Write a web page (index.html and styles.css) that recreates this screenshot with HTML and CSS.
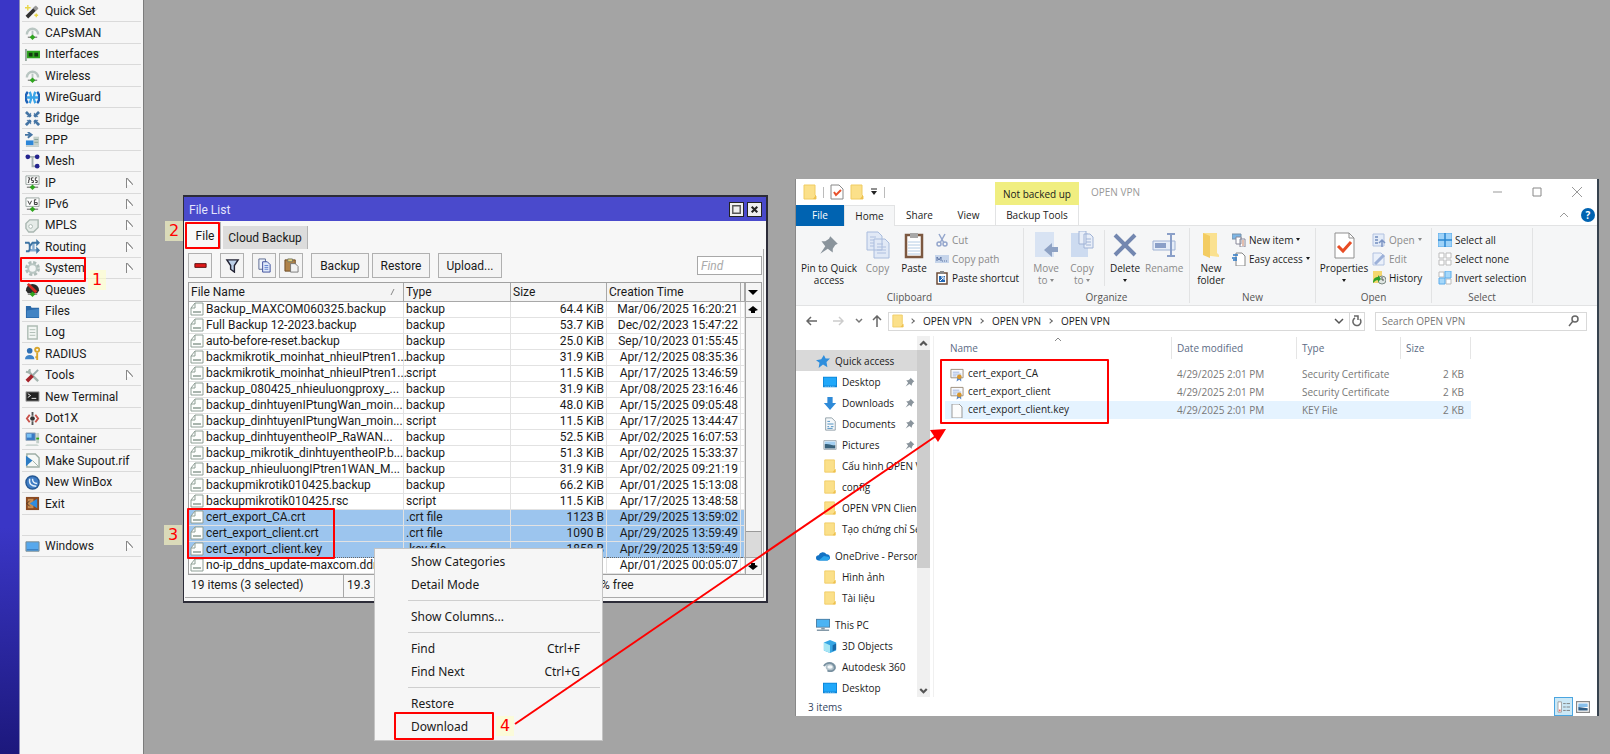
FILE: index.html
```html
<!DOCTYPE html>
<html lang="en">
  <head>
    <meta charset="UTF-8" />
    <meta name="viewport" content="width=device-width, initial-scale=1.0" />
    <title>Download certificates</title>
    <link rel="stylesheet" href="styles.css">
  </head>
  <body>
    <!-- shared icons -->
    <svg class="sprite">
      <symbol id="doc" viewBox="0 0 14 14"><path d="M1 13V6l4-5h8v12z" fill="#fdfefd" stroke="#8f9f96"/><path d="M1 6h4V1" fill="none" stroke="#8f9f96"/><path d="M3 10h8" stroke="#a9b5ae" stroke-width="2"/></symbol>
      <symbol id="folder" viewBox="0 0 14 16"><path d="M1 1h11v10l1 1v3H1z" fill="#fbe08a" stroke="#f0cc62"/><path d="M10 15l3-4v4z" fill="#eec04e"/></symbol>
      <symbol id="pin" viewBox="0 0 16 16"><path d="M9 1l6 6-2 1-2 3v3l-4-3-6 4 4-6-3-4h3l3-2z" fill="#8a949c"/></symbol>
      <symbol id="antenna" viewBox="0 0 16 16"><path d="M2 10a6 6 0 1 1 12 0" fill="none" stroke="#b9c6c2" stroke-width="2.5"/><path d="M8 6v7" stroke="#b9c6c2" stroke-width="2"/><path d="M3 13h10" stroke="#555"/><path d="M8 10l3 3-3 3-3-3z" fill="#2fa51e"/></symbol>
      <symbol id="cert" viewBox="0 0 15 14"><path d="M1 1h13v9H1z" fill="#f8fafd" stroke="#9c8c78"/><path d="M3 4h7M3 6h9M3 8h4" stroke="#9bb3e0"/><path d="M8 9l-1 5 3-2 2 2v-5z" fill="#5c86c4"/><circle cx="10" cy="9" r="2.500" fill="#d9972c"/></symbol>
      <symbol id="screen" viewBox="0 0 16 14"><path d="M0 1h16v12H0z" fill="#0c84d8"/><path d="M1 2h14v9H1z" fill="#20a8fa"/><path d="M2 12h12" stroke="#8fd0f8" stroke-dasharray="1 1"/></symbol>
      <symbol id="pages" viewBox="0 0 24 28"><path d="M1 1h11l4 4v14H1zM8 8h11l4 4v15H8z" fill="#e1e9f6" stroke="#a9bcdd"/><path d="M4 6h6M4 9h4M4 12h4M4 15h4M11 13h6M11 16h9M11 19h9M11 22h9" stroke="#aebfdf"/></symbol>
    </svg>

    <div class="rail"></div>
    <nav class="sidebar">
      <ul>
        <li><a href="#"><svg viewBox="0 0 16 16"><path d="M2 14L12 4" stroke="#333" stroke-width="4"/><path d="M10 6l3-3" stroke="#999" stroke-width="4"/><path d="M3 1v6M0 4h6M12 10v4M10 12h4" stroke="#e8d648" stroke-width="1.5"/></svg>Quick Set</a></li>
        <li><a href="#"><svg><use href="#antenna"/></svg>CAPsMAN</a></li>
        <li><a href="#"><svg viewBox="0 0 16 16"><path d="M1 2v13" stroke="#98a8a0" stroke-width="2"/><path d="M2 4h14v8H2z" fill="#2ea51f"/><path d="M4 6h4v4H4zM10 6h4v4h-4z" fill="#143b12"/></svg>Interfaces</a></li>
        <li><a href="#"><svg><use href="#antenna"/></svg>Wireless</a></li>
        <li><a href="#"><svg viewBox="0 0 16 16"><path d="M3 2C0 5 0 11 3 14M13 2c3 3 3 9 0 12" fill="none" stroke="#1c62b8" stroke-width="2.500"/><path d="M5 2c2 4 2 8 0 12M11 2c-2 4-2 8 0 12M2 8h12" fill="none" stroke="#39a4e8" stroke-width="2.500"/></svg>WireGuard</a></li>
        <li><a href="#"><svg viewBox="0 0 16 16"><path d="M1 1l5 5M15 1l-5 5M1 15l5-5M15 15l-5-5" stroke="#4474a4" stroke-width="3"/><path d="M6 2v4H2M10 2v4h4M6 14v-4H2M10 14v-4h4" fill="none" stroke="#4474a4"/></svg>Bridge</a></li>
        <li><a href="#"><svg viewBox="0 0 16 16"><path d="M0 3h5M3 0l4 3-4 3" fill="none" stroke="#4474a4" stroke-width="2"/><path d="M9 5h6v9H9z" fill="#c3cfc9"/><path d="M10 8h4M10 11h4" stroke="#8aa198"/><path d="M1 9h8v5H1z" fill="#2d86d8"/><path d="M1 15h14" stroke="#9aa"/></svg>PPP</a></li>
        <li><a href="#"><svg viewBox="0 0 16 16"><path d="M3 3h10M8 3v10h5" fill="none" stroke="#a6b2b0" stroke-width="2"/><circle cx="3" cy="3" r="2.5" fill="#24248e"/><circle cx="13" cy="3" r="2.5" fill="#24248e"/><circle cx="13" cy="13" r="2.5" fill="#24248e"/></svg>Mesh</a></li>
        <li class="more"><a href="#"><svg viewBox="0 0 16 16"><path d="M1 1h14v9H1z" fill="#fff" stroke="#98a29e"/><path d="M3 3h2v2H4v3H3M7 8h2V6H7V3h2M11 8h2V6h-2V3h2" fill="none" stroke="#333"/><path d="M2 13h12" stroke="#555"/><path d="M8 10l3 3-3 3-3-3z" fill="#2fa51e"/></svg>IP</a></li>
        <li class="more"><a href="#"><svg viewBox="0 0 16 16"><path d="M1 1h14v9H1z" fill="#fff" stroke="#98a29e"/><path d="M3 4l2 4 2-4M12 3h-2v5h3V6h-3" fill="none" stroke="#333"/><path d="M2 13h12" stroke="#555"/><path d="M8 10l3 3-3 3-3-3z" fill="#2fa51e"/></svg>IPv6</a></li>
        <li class="more"><a href="#"><svg viewBox="0 0 16 16"><path d="M5 2h9v8l-5 5H4l-3-4V6z" fill="#e5ebe8" stroke="#a9b7b1" stroke-width="1.5"/><circle cx="6" cy="9" r="2" fill="#fff" stroke="#a9b7b1"/></svg>MPLS</a></li>
        <li class="more"><a href="#"><svg viewBox="0 0 16 16"><path d="M5 12h8M9 4v8" fill="none" stroke="#86acd0" stroke-width="2.500"/><path d="M0 4h4l1 2v5l-1 2H1M5 8l3-4h5" fill="none" stroke="#3e74a4" stroke-width="2"/><path d="M12 0l4 4-4 4zM12 8l4 4-4 4z" fill="#3e74a4"/></svg>Routing</a></li>
        <li class="more"><a href="#"><svg viewBox="0 0 16 16"><circle cx="8" cy="8" r="6" fill="none" stroke="#aebcb8" stroke-width="4" stroke-dasharray="3 1.7"/><circle cx="8" cy="8" r="4.500" fill="#f4f6f5" stroke="#b8c6c2" stroke-width="2"/></svg>System</a></li>
        <li><a href="#"><svg viewBox="0 0 16 16"><path d="M1 9a7 7 0 0 1 14 0l-2 3H3z" fill="#2a2a2a"/><path d="M3 2l9 9" stroke="#d42a20" stroke-width="3"/><path d="M3 13h10" stroke="#555"/><path d="M8 10l3 3-3 3-3-3z" fill="#2fa51e"/></svg>Queues</a></li>
        <li><a href="#"><svg viewBox="0 0 16 16"><path d="M1 2h5l1 2h8v11H1z" fill="#2a68a8"/><path d="M2 7l13-2v9H2z" fill="#4284c4"/></svg>Files</a></li>
        <li><a href="#"><svg viewBox="0 0 16 16"><path d="M3 1h10v14H3z" fill="#f2f6f3" stroke="#aebcb4" stroke-width="1.5"/><path d="M5 5h6M5 8h6M5 11h6" stroke="#aebcb4"/></svg>Log</a></li>
        <li><a href="#"><svg viewBox="0 0 16 16"><circle cx="5" cy="5" r="3" fill="#2f70b4"/><path d="M0 14c0-6 10-6 10 0z" fill="#3f84c8"/><circle cx="13" cy="4" r="2.2" fill="none" stroke="#d8a52c" stroke-width="2"/><path d="M13 7v8M13 12h-2" stroke="#d8a52c" stroke-width="2"/></svg>RADIUS</a></li>
        <li class="more"><a href="#"><svg viewBox="0 0 16 16"><path d="M3 3l11 11" stroke="#a4b4ae" stroke-width="2.5"/><path d="M1 4l4 1V1" fill="none" stroke="#a4b4ae" stroke-width="2"/><path d="M14 2L8 8" stroke="#9aa" stroke-width="2"/><path d="M8 8l-6 6" stroke="#a4222a" stroke-width="4"/></svg>Tools</a></li>
        <li><a href="#"><svg viewBox="0 0 16 16"><path d="M1 3h14v10H1z" fill="#222" stroke="#aaa"/><path d="M3 5l3 2-3 2M7 10h5" fill="none" stroke="#eee"/></svg>New Terminal</a></li>
        <li><a href="#"><svg viewBox="0 0 16 16"><path d="M5 4L2 8l3 4M11 4l3 4-3 4" fill="none" stroke="#c85048" stroke-width="2"/><circle cx="8" cy="8" r="2.5" fill="#333"/><path d="M8 1v4M8 11v4" stroke="#555" stroke-width="2"/></svg>Dot1X</a></li>
        <li><a href="#"><svg viewBox="0 0 16 16"><path d="M1 1h10v8H1z" fill="#3a7ac4" stroke="#9ab"/><path d="M2 2h5v4H2z" fill="#7ac0f4"/><path d="M12 1h3v11h-3z" fill="#c3cfc9"/><path d="M12 7h3" stroke="#2fa51e" stroke-width="2"/><path d="M2 13h11l2 2H0z" fill="#ccd6d2"/></svg>Container</a></li>
        <li><a href="#"><svg viewBox="0 0 16 16"><path d="M2 1h9l4 4v10H2z" fill="#f5f8f6" stroke="#9eafa6" stroke-width="1.5"/><path d="M1 3l7 5-7 6z" fill="#2c7cc4"/><path d="M8 8l6 6" stroke="#9eafa6"/></svg>Make Supout.rif</a></li>
        <li><a href="#"><svg viewBox="0 0 16 16"><circle cx="8" cy="8" r="7" fill="#3f7cc4" stroke="#255894" stroke-width="1.5"/><path d="M5 4c-1 6 2 8 7 8M8 4c0 4 2 5 5 5" fill="none" stroke="#e4f0fb" stroke-width="1.5"/></svg>New WinBox</a></li>
        <li><a href="#"><svg viewBox="0 0 16 16"><path d="M1 1h14v14H1z" fill="#8a4a22"/><path d="M3 3h6v10H3z" fill="#c88c50"/><path d="M2 8l3 3M2 8l3-3" stroke="#432"/><path d="M13 3v10L5 8z" fill="#2e8ce0"/></svg>Exit</a></li>
        <li class="spacer"></li>
        <li class="more"><a href="#"><svg viewBox="0 0 16 16"><path d="M1 3h14v10H1z" fill="#57a8ec" stroke="#7a8a90"/><path d="M2 11h12v1H2z" fill="#3272b4"/></svg>Windows</a></li>
      </ul>
    </nav>

    <section class="winbox">
      <header class="winbox-title">
        <h1>File List</h1>
        <button aria-label="Maximize"><svg viewBox="0 0 14 14"><path d="M3 3h8v8H3z" fill="none" stroke="#555" stroke-width="1.5"/></svg></button>
        <button aria-label="Close"><svg viewBox="0 0 14 14"><path d="M4 4l6 6M10 4l-6 6" stroke="#222" stroke-width="2.2"/></svg></button>
      </header>
      <div class="winbox-tabs">
        <button class="active">File</button>
        <button>Cloud Backup</button>
      </div>
      <div class="winbox-body">
        <div class="winbox-tools">
          <button class="square" aria-label="Remove"><svg viewBox="0 0 16 16"><path d="M2 6h12v4H2z" fill="#e01818" stroke="#5a1010"/></svg></button>
          <button class="square group-start" aria-label="Filter"><svg viewBox="0 0 16 16"><path d="M2 2h12L10 8v7l-4-3V8z" fill="#bcd0e8" stroke="#223" stroke-width="1.5"/></svg></button>
          <button class="square group-start" aria-label="Copy"><svg viewBox="0 0 16 16"><path d="M2 1h7v11H2z" fill="#eef3fb" stroke="#5c6a90"/><path d="M6 4h5l3 3v8H6z" fill="#dfe9fa" stroke="#3d4e9c"/><path d="M8 8h4M8 10h4M8 12h4" stroke="#6080d0"/></svg></button>
          <button class="square" aria-label="Paste"><svg viewBox="0 0 16 16"><path d="M1 2h11v12H1z" fill="#b0834a" stroke="#6c4a22"/><path d="M4 1h5v3H4z" fill="#e8d478" stroke="#776"/><path d="M7 6h5l3 3v6H7z" fill="#f2f2f2" stroke="#777"/></svg></button>
          <button class="group-start backup">Backup</button>
          <button class="backup">Restore</button>
          <button class="group-start upload">Upload...</button>
          <input type="text" aria-label="Find" placeholder="Find" />
        </div>
        <div class="file-area">
          <table class="files">
            <colgroup><col class="c-name"><col class="c-type"><col class="c-size"><col class="c-time"><col></colgroup>
            <thead>
              <tr><th>File Name <svg class="sort" viewBox="0 0 6 8"><path d="M1 7l3-6" stroke="#888"/></svg></th><th>Type</th><th>Size</th><th>Creation Time</th><th></th></tr>
            </thead>
            <tbody>
              <tr><td><svg><use href="#doc"/></svg>Backup_MAXCOM060325.backup</td><td>backup</td><td>64.4 KiB</td><td>Mar/06/2025 16:20:21</td><td></td></tr>
              <tr><td><svg><use href="#doc"/></svg>Full Backup 12-2023.backup</td><td>backup</td><td>53.7 KiB</td><td>Dec/02/2023 15:47:22</td><td></td></tr>
              <tr><td><svg><use href="#doc"/></svg>auto-before-reset.backup</td><td>backup</td><td>25.0 KiB</td><td>Sep/10/2023 01:55:45</td><td></td></tr>
              <tr><td><svg><use href="#doc"/></svg>backmikrotik_moinhat_nhieuIPtren1...</td><td>backup</td><td>31.9 KiB</td><td>Apr/12/2025 08:35:36</td><td></td></tr>
              <tr><td><svg><use href="#doc"/></svg>backmikrotik_moinhat_nhieuIPtren1...</td><td>script</td><td>11.5 KiB</td><td>Apr/17/2025 13:46:59</td><td></td></tr>
              <tr><td><svg><use href="#doc"/></svg>backup_080425_nhieuluongproxy_...</td><td>backup</td><td>31.9 KiB</td><td>Apr/08/2025 23:16:46</td><td></td></tr>
              <tr><td><svg><use href="#doc"/></svg>backup_dinhtuyenIPtungWan_moin...</td><td>backup</td><td>48.0 KiB</td><td>Apr/15/2025 09:05:48</td><td></td></tr>
              <tr><td><svg><use href="#doc"/></svg>backup_dinhtuyenIPtungWan_moin...</td><td>script</td><td>11.5 KiB</td><td>Apr/17/2025 13:44:47</td><td></td></tr>
              <tr><td><svg><use href="#doc"/></svg>backup_dinhtuyentheoIP_RaWAN...</td><td>backup</td><td>52.5 KiB</td><td>Apr/02/2025 16:07:53</td><td></td></tr>
              <tr><td><svg><use href="#doc"/></svg>backup_mikrotik_dinhtuyentheoIP.b...</td><td>backup</td><td>51.3 KiB</td><td>Apr/02/2025 15:33:37</td><td></td></tr>
              <tr><td><svg><use href="#doc"/></svg>backup_nhieuluongIPtren1WAN_M...</td><td>backup</td><td>31.9 KiB</td><td>Apr/02/2025 09:21:19</td><td></td></tr>
              <tr><td><svg><use href="#doc"/></svg>backupmikrotik010425.backup</td><td>backup</td><td>66.2 KiB</td><td>Apr/01/2025 15:13:08</td><td></td></tr>
              <tr><td><svg><use href="#doc"/></svg>backupmikrotik010425.rsc</td><td>script</td><td>11.5 KiB</td><td>Apr/17/2025 13:48:58</td><td></td></tr>
              <tr class="selected"><td><svg><use href="#doc"/></svg>cert_export_CA.crt</td><td>.crt file</td><td>1123 B</td><td>Apr/29/2025 13:59:02</td><td></td></tr>
              <tr class="selected"><td><svg><use href="#doc"/></svg>cert_export_client.crt</td><td>.crt file</td><td>1090 B</td><td>Apr/29/2025 13:59:49</td><td></td></tr>
              <tr class="selected focus"><td><svg><use href="#doc"/></svg>cert_export_client.key</td><td>.key file</td><td>1858 B</td><td>Apr/29/2025 13:59:49</td><td></td></tr>
              <tr><td><svg><use href="#doc"/></svg>no-ip_ddns_update-maxcom.ddn</td><td></td><td></td><td>Apr/01/2025 00:05:07</td><td></td></tr>
            </tbody>
          </table>
          <div class="scroll">
            <button class="columns" aria-label="Columns"><svg viewBox="0 0 14 14"><path d="M2 5h10l-5 5z"/></svg></button>
            <button aria-label="Scroll up"><svg viewBox="0 0 14 14"><path d="M7 3l5 4-3 1v2H5V8L2 7z"/></svg></button>
            <div class="thumb"></div>
            <div class="track"></div>
            <button aria-label="Scroll down"><svg viewBox="0 0 14 14"><path d="M7 11l5-4-3-1V4H5v2L2 7z"/></svg></button>
          </div>
        </div>
        <footer class="winbox-status">
          <span class="count">19 items (3 selected)</span>
          <span class="usage">19.3</span>
          <span>% free</span>
        </footer>
      </div>
    </section>

    <section class="explorer">
      <header class="ex-title">
        <div class="quick">
          <svg><use href="#folder"/></svg><i></i>
          <svg viewBox="0 0 14 16"><path d="M1 1h8l4 4v10H1z" fill="#fff" stroke="#888"/><path d="M4 8l2 3 5-5" fill="none" stroke="#e8502a" stroke-width="2"/></svg>
          <svg><use href="#folder"/></svg>
          <svg class="drop" viewBox="0 0 8 8"><path d="M1 1h6" stroke="#222"/><path d="M1 3h6L4 7z" fill="#222"/></svg><i></i>
        </div>
        <span class="context">Not backed up</span>
        <h2>OPEN VPN</h2>
        <div class="controls">
          <button aria-label="Minimize"><svg viewBox="0 0 10 10"><path d="M1 5h9" stroke="#999"/></svg></button>
          <button aria-label="Maximize"><svg viewBox="0 0 10 10"><path d="M1 1h8v8H1z" fill="none" stroke="#888"/></svg></button>
          <button aria-label="Close"><svg viewBox="0 0 10 10"><path d="M0 0l10 10M10 0L0 10" stroke="#999"/></svg></button>
        </div>
      </header>
      <div class="ex-tabs">
        <button class="file">File</button>
        <button class="home">Home</button>
        <button>Share</button>
        <button>View</button>
        <button class="tools">Backup Tools</button>
        <svg class="collapse" viewBox="0 0 10 10"><path d="M1 7l4-4 4 4" fill="none" stroke="#999"/></svg>
        <button class="help" aria-label="Help">?</button>
      </div>
      <div class="ribbon">
        <div class="group clipboard">
          <div class="tools">
            <button class="big pinto"><svg><use href="#pin"/></svg>Pin to Quick<br>access</button>
            <button class="big off"><svg><use href="#pages"/></svg>Copy</button>
            <button class="big paste"><svg viewBox="0 0 24 28"><path d="M4 4h16v22H4z" fill="#fff" stroke="#7c5840" stroke-width="2.5"/><path d="M8 2h8v5H8z" fill="#a8a8a8"/><path d="M6 11h12M6 14h12M6 17h12M6 20h12M6 23h12" stroke="#b4cce4"/></svg>Paste</button>
            <div class="stack">
              <button class="off"><svg viewBox="0 0 14 14"><path d="M4 1l5 9M10 1L5 10" stroke="#94a6cc" stroke-width="1.5"/><circle cx="4" cy="11" r="2" fill="none" stroke="#94a6cc" stroke-width="1.5"/><circle cx="10" cy="11" r="2" fill="none" stroke="#94a6cc" stroke-width="1.5"/></svg>Cut</button>
              <button class="off"><svg viewBox="0 0 14 14"><path d="M0 3h14v8H0z" fill="#c5d4ea"/><path d="M2 9V5l2 3 2-3v4M7 9h1M9 9h1M11 9h1" fill="none" stroke="#5c74a4"/></svg>Copy path</button>
              <button><svg viewBox="0 0 14 14"><path d="M2 2h10v11H2z" fill="#fff" stroke="#6c4c38" stroke-width="1.5"/><path d="M5 0h4v3H5z" fill="#888"/><path d="M4 5h6v6H4z" fill="#2467b4"/><path d="M5 10l3-3M6 6h3v3" fill="none" stroke="#fff"/></svg>Paste shortcut</button>
            </div>
          </div>
          <p>Clipboard</p>
        </div>
        <div class="group organize">
          <div class="tools">
            <button class="big off"><svg viewBox="0 0 24 28"><path d="M1 1h19v25H1z" fill="#d8e3f3"/><path d="M24 16v5h-6v5l-8-7 8-7v4z" fill="#8ea2c4"/></svg>Move<br>to <b></b></button>
            <button class="big off"><svg viewBox="0 0 24 28"><path d="M1 2h17v24H1z" fill="#cddbf0"/><path d="M9 0h7v13H9zM14 3h6l3 3v11h-9z" fill="#e8eef8" stroke="#a0b3d6"/><path d="M16 8h5M16 11h5M16 14h5" stroke="#a0b3d6"/></svg>Copy<br>to <b></b></button>
            <button class="big delete"><svg viewBox="0 0 24 28"><path d="M2 4l20 20M22 4L2 24" stroke="#7387b0" stroke-width="4"/></svg>Delete<br><b></b></button>
            <button class="big off rename"><svg viewBox="0 0 24 28"><path d="M1 10h22v9H1z" fill="#e6edf8" stroke="#9fb2d4"/><path d="M3 12h11v5H3z" fill="#8a9fc8"/><path d="M15 3h8M19 3v22M15 25h8" fill="none" stroke="#8a9fc8" stroke-width="2"/></svg>Rename</button>
          </div>
          <p>Organize</p>
        </div>
        <div class="group new">
          <div class="tools">
            <button class="big"><svg viewBox="0 0 24 28"><path d="M4 2h14v20l2 2v2L4 24z" fill="#fae190"/><path d="M4 2l7 3v22l-7-3z" fill="#f3cc62"/></svg>New<br>folder</button>
            <div class="stack">
              <button><svg viewBox="0 0 14 14"><path d="M0 1h9v5H0z" fill="#7cb6e6" stroke="#7890a8"/><path d="M4 4h5v7H4zM8 6h5v8H8z" fill="#fff" stroke="#889"/><path d="M10 8h2M10 10h2M10 12h2" stroke="#c87c5c"/></svg>New item <b></b></button>
              <button><svg viewBox="0 0 14 14"><path d="M4 1h6l3 3v10H4z" fill="#fff" stroke="#888"/><path d="M1 3h5M0 6h5M1 8h4" stroke="#2d78c4" stroke-width="1.5"/></svg>Easy access <b></b></button>
            </div>
          </div>
          <p>New</p>
        </div>
        <div class="group open">
          <div class="tools">
            <button class="big"><svg viewBox="0 0 24 28"><path d="M3 2h14l5 5v20H3z" fill="#fff" stroke="#8f8f8f"/><path d="M17 2v5h5" fill="none" stroke="#8f8f8f"/><path d="M6 15l5 5 8-9" fill="none" stroke="#e84c24" stroke-width="3"/></svg>Properties<br><b></b></button>
            <div class="stack">
              <button class="off"><svg viewBox="0 0 14 14"><path d="M1 1h11v12H1z" fill="#e4ecf8" stroke="#b2c2e0"/><path d="M3 4h3M3 7h3M3 10h3" stroke="#8ea4cc" stroke-width="2"/><path d="M10 14V8M7 10l3-3 3 3" fill="none" stroke="#7c94c4" stroke-width="1.5"/></svg>Open <b></b></button>
              <button class="off"><svg viewBox="0 0 14 14"><path d="M1 1h8l3 3v9H1z" fill="#eaf0fa" stroke="#b2c2e0"/><path d="M3 12l9-9" stroke="#9cb0d8" stroke-width="3"/></svg>Edit</button>
              <button><svg viewBox="0 0 14 14"><path d="M1 0h9v12H1z" fill="#f5d76e"/><circle cx="10" cy="9" r="4" fill="#dfe5e2" stroke="#7d8a84"/><path d="M10 6v3h2" fill="none" stroke="#555"/><path d="M1 12c0-4 2-6 5-6V4l3 4-3 3V9c-2 0-3 1-5 3z" fill="#2da02a"/></svg>History</button>
            </div>
          </div>
          <p>Open</p>
        </div>
        <div class="group select">
          <div class="tools">
            <div class="stack">
              <button><svg viewBox="0 0 14 14"><path d="M0 0h14v14H0z" fill="#9ed2f8" stroke="#5cacea"/><path d="M7 0v14M0 7h14" stroke="#2a86d0" stroke-width="1.5"/></svg>Select all</button>
              <button><svg viewBox="0 0 14 14"><path d="M1 1h5v5H1zM8 1h5v5H8zM1 8h5v5H1zM8 8h5v5H8z" fill="#fff" stroke="#bbb"/></svg>Select none</button>
              <button><svg viewBox="0 0 14 14"><path d="M1 1h5v5H1zM8 8h5v5H8z" fill="#fff" stroke="#bbb"/><path d="M7 0h6v7H7zM1 7h6v6H1z" fill="#a6d8fa" stroke="#5cacea"/></svg>Invert selection</button>
            </div>
          </div>
          <p>Select</p>
        </div>
      </div>
      <div class="address">
        <button aria-label="Back"><svg viewBox="0 0 12 12"><path d="M11 6H1M5 2L1 6l4 4" fill="none" stroke="#666" stroke-width="1.5"/></svg></button>
        <button aria-label="Forward"><svg viewBox="0 0 12 12"><path d="M1 6h10M7 2l4 4-4 4" fill="none" stroke="#ccc" stroke-width="1.5"/></svg></button>
        <button class="narrow" aria-label="Recent"><svg viewBox="0 0 12 12"><path d="M3 4l3 3 3-3" fill="none" stroke="#777" stroke-width="1.5"/></svg></button>
        <button class="narrow" aria-label="Up"><svg viewBox="0 0 12 12"><path d="M6 12V1M2 5l4-4 4 4" fill="none" stroke="#666" stroke-width="1.5"/></svg></button>
        <div class="path">
          <svg class="dir"><use href="#folder"/></svg>
          <i></i><a href="#">OPEN VPN</a>
          <i></i><a href="#">OPEN VPN</a>
          <i></i><a href="#">OPEN VPN</a>
          <button aria-label="History"><svg viewBox="0 0 12 12"><path d="M2 4l4 4 4-4" fill="none" stroke="#555" stroke-width="1.5"/></svg></button>
          <button class="reload" aria-label="Refresh"><svg viewBox="0 0 12 12"><path d="M4 3a4 4 0 1 0 5 1M3 1h4v4" fill="none" stroke="#666" stroke-width="1.5"/></svg></button>
        </div>
        <div class="search">
          <input type="text" aria-label="Search" placeholder="Search OPEN VPN" />
          <svg viewBox="0 0 12 12"><circle cx="7" cy="4" r="3" fill="none" stroke="#666" stroke-width="1.5"/><path d="M5 6l-4 5" stroke="#666" stroke-width="1.5"/></svg>
        </div>
      </div>
      <div class="ex-main">
        <nav class="tree">
          <a class="root current" href="#"><svg viewBox="0 0 16 16"><path d="M9 1l2 4h5l-4 4 1 6-5-3-5 4 1-6-4-3 6-1z" fill="#2f8edc"/></svg>Quick access</a>
          <a href="#"><svg><use href="#screen"/></svg>Desktop<svg class="pinned"><use href="#pin"/></svg></a>
          <a href="#"><svg viewBox="0 0 16 16"><path d="M5 1h6v7h4l-7 8-7-8h4z" fill="#2e8ad8"/></svg>Downloads<svg class="pinned"><use href="#pin"/></svg></a>
          <a href="#"><svg viewBox="0 0 16 16"><path d="M3 1h7l4 4v10H3z" fill="#f5f8fa" stroke="#8a9aa4"/><path d="M5 5h3M5 8h7M5 11h2M9 11h3M5 13h6" stroke="#3f86bc"/></svg>Documents<svg class="pinned"><use href="#pin"/></svg></a>
          <a href="#"><svg viewBox="0 0 16 16"><path d="M1 3h14v10H1z" fill="#fff" stroke="#98a4ac"/><path d="M2 4h12v4H2z" fill="#a4d0f2"/><path d="M2 7c5-1 7 2 12 1v4H2z" fill="#38627c"/></svg>Pictures<svg class="pinned"><use href="#pin"/></svg></a>
          <a href="#"><svg><use href="#folder"/></svg>Cấu hình OPEN V</a>
          <a href="#"><svg><use href="#folder"/></svg>config</a>
          <a href="#"><svg><use href="#folder"/></svg>OPEN VPN Clien</a>
          <a href="#"><svg><use href="#folder"/></svg>Tạo chứng chỉ Se</a>
          <a class="root" href="#"><svg viewBox="0 0 16 16"><path d="M3 13a3 3 0 0 1 0-6 5 5 0 0 1 9-1 3.500 3.500 0 0 1 1 7z" fill="#1272c4"/><path d="M3 13l6-5 6 1a3 3 0 0 1-2 4z" fill="#28a4ec"/></svg>OneDrive - Person</a>
          <a href="#"><svg><use href="#folder"/></svg>Hình ảnh</a>
          <a href="#"><svg><use href="#folder"/></svg>Tài liệu</a>
          <a class="root" href="#"><svg viewBox="0 0 16 16"><path d="M0 1h16v10H0z" fill="#4f7ea0"/><path d="M1 2h14v8H1z" fill="#4cb4f4"/><path d="M6 12h4M1 14h14" stroke="#8499a8" stroke-width="1.500"/></svg>This PC</a>
          <a href="#"><svg viewBox="0 0 16 16"><path d="M1 4l7-3 7 3v9l-7 3-7-3z" fill="#36a6e4"/><path d="M1 4l7 3v9l-7-3z" fill="#a6e6f4"/><path d="M11 7l4-2v7l-4 2z" fill="#1668a8"/></svg>3D Objects</a>
          <a href="#"><svg viewBox="0 0 16 16"><ellipse cx="9" cy="8" rx="6" ry="5" fill="#b4c4cc"/><path d="M1 7c3-5 10-5 12 0s-4 7-8 5" fill="none" stroke="#7890a0" stroke-width="2"/><ellipse cx="8" cy="8" rx="3" ry="2" fill="#f4f8fa"/></svg>Autodesk 360</a>
          <a href="#"><svg><use href="#screen"/></svg>Desktop</a>
        </nav>
        <div class="tree-scroll">
          <svg viewBox="0 0 12 12"><path d="M3 8l3-3 3 3" fill="none" stroke="#555" stroke-width="2"/></svg>
          <div class="thumb"></div>
          <svg viewBox="0 0 12 12"><path d="M3 5l3 3 3-3" fill="none" stroke="#555" stroke-width="2"/></svg>
        </div>
        <div class="listing">
          <svg class="asc" viewBox="0 0 8 6"><path d="M1 5l3-3 3 3" fill="none" stroke="#888"/></svg>
          <table>
            <thead><tr><th class="l-name">Name</th><th class="l-date">Date modified</th><th class="l-type">Type</th><th class="l-size">Size</th></tr></thead>
            <tbody>
              <tr><td><svg><use href="#cert"/></svg>cert_export_CA</td><td>4/29/2025 2:01 PM</td><td>Security Certificate</td><td>2 KB</td></tr>
              <tr><td><svg><use href="#cert"/></svg>cert_export_client</td><td>4/29/2025 2:01 PM</td><td>Security Certificate</td><td>2 KB</td></tr>
              <tr class="hover"><td><svg viewBox="0 0 14 14"><path d="M2 0h7l3 3v11H2z" fill="#fcfcfc" stroke="#999"/></svg>cert_export_client.key</td><td>4/29/2025 2:01 PM</td><td>KEY File</td><td>2 KB</td></tr>
            </tbody>
          </table>
        </div>
      </div>
      <footer class="ex-status">
        <span>3 items</span>
        <button class="details" aria-label="Details"><svg viewBox="0 0 16 14"><path d="M1 1h4v12H1z" fill="#fff" stroke="#999"/><path d="M2 11h2" stroke="#e66" stroke-width="2"/><path d="M7 3h3M11 3h4M7 7h3M11 7h4M7 11h3M11 11h4" stroke="#777"/></svg></button>
        <button aria-label="Thumbnails"><svg viewBox="0 0 12 10"><path d="M0 0h12v10H0z" fill="#fff" stroke="#888" stroke-width="2"/><path d="M2 2h8v3H2z" fill="#88c0ec"/><path d="M2 5l8 1v2H2z" fill="#2f5c84"/></svg></button>
      </footer>
    </section>

    <div class="menu">
      <button>Show Categories</button>
      <button>Detail Mode</button>
      <hr>
      <button>Show Columns...</button>
      <hr>
      <button>Find<span>Ctrl+F</span></button>
      <button>Find Next<span>Ctrl+G</span></button>
      <hr>
      <button>Restore</button>
      <button>Download</button>
    </div>

    <!-- step marks -->
    <div class="mark mark-system"></div><span class="step step-1">1</span>
    <div class="mark mark-tab"></div><span class="step step-2">2</span>
    <div class="mark mark-rows"></div><span class="step step-3">3</span>
    <div class="mark mark-download"></div><span class="step step-4">4</span>
    <div class="mark mark-result"></div>
    <svg class="arrow" viewBox="0 0 432 298"><path d="M1 296L422 8" stroke="#f00" stroke-width="2"/><path d="M432 1l-16 1 8 12z" fill="#f00"/></svg>
  </body>
</html>
```
FILE: styles.css
```css
* {
  box-sizing: border-box;
}

body {
  margin: 0;
  display: flex;
  min-height: 100vh;
  position: relative;
  overflow: hidden;
  background: #a4a4a4;
  font-family: Roboto, "Liberation Sans", sans-serif;
  font-size: 12px;
  color: #1a1a1a;
}

a {
  color: inherit;
  text-decoration: none;
}

button {
  margin: 0;
  padding: 0;
  border: 0;
  background: none;
  font: inherit;
  color: inherit;
}

h1,
h2,
p {
  margin: 0;
  font-size: inherit;
  font-weight: normal;
}

svg {
  flex: none;
}

.sprite {
  position: absolute;
  width: 0;
  height: 0;
}

/* left menu */
.rail {
  width: 20px;
  background: linear-gradient(#3a36c6 70%, #1c187c);
  border-right: 1px solid #8c8cb8;
}

.sidebar {
  width: 124px;
  padding-top: 1px;
  background: #f6f6f6;
  border-right: 1px solid #7c7c7c;
}

.sidebar ul {
  margin: 0;
  padding: 0 2px;
  list-style: none;
}

.sidebar li {
  height: 21px;
  border-bottom: 1px solid #dadada;
}

.sidebar li:nth-child(5n + 2),
.sidebar li:nth-child(5n + 4) {
  height: 22px;
}

.sidebar a {
  display: flex;
  align-items: center;
  gap: 5px;
  height: 100%;
  padding-left: 3px;
}

.sidebar svg {
  width: 15px;
  height: 15px;
}

.sidebar .more a::after {
  content: "";
  width: 6px;
  height: 10px;
  margin: 0 8px 0 auto;
  border-left: 1px solid #888;
  background: linear-gradient(to top right, #fff 40%, #999 46%, #999 54%, transparent 60%) top left / 6px 7px no-repeat;
}

/* file list window */
.winbox {
  position: absolute;
  left: 183px;
  top: 195px;
  width: 585px;
  border: 2px solid #2c2c38;
  border-left-width: 1px;
  background: #f7f7f7;
}

.winbox-title {
  display: flex;
  align-items: center;
  gap: 3px;
  height: 24px;
  padding: 1px 4px 0 5px;
  background: #4a4acc;
  color: #e4e4fc;
}

.winbox-title h1 {
  flex: 1;
}

.winbox-title button {
  width: 15px;
  height: 15px;
  background: #eee;
  border: 1px solid #222;
}

.winbox-title svg {
  display: block;
  width: 13px;
  height: 13px;
}

.winbox-tabs {
  display: flex;
  align-items: flex-end;
  gap: 2px;
  height: 28px;
  padding-left: 2px;
}

.winbox-tabs button {
  width: 85px;
  height: 23px;
  padding-top: 1px;
  background: #dcdcdc;
  border-right: 1px solid #b4b4b4;
}

.winbox-tabs .active {
  width: 35px;
  height: 27px;
  padding-left: 4px;
  background: #f9f9f9;
}

.winbox-body {
  margin: 0 2px 3px 1px;
  padding: 3px 1px 0 3px;
  border: solid #aaa;
  border-width: 0 1px 1px 0;
}

.winbox-tools {
  display: flex;
  align-items: center;
  gap: 3px;
  height: 27px;
}

.winbox-tools button {
  display: flex;
  align-items: center;
  justify-content: center;
  height: 25px;
  background: #f4f4f4;
  border: 1px solid #b0b0b0;
}

.winbox-tools .square {
  width: 24px;
}

.winbox-tools .backup {
  width: 58px;
}

.winbox-tools .upload {
  width: 64px;
}

.winbox-tools .group-start {
  margin-left: 5px;
}

.winbox-tools svg {
  width: 15px;
  height: 15px;
}

.winbox-tools input {
  width: 65px;
  height: 19px;
  margin-left: auto;
  padding: 0 3px;
  border: 1px solid #a8a8a8;
  font: italic 12px Roboto, "Liberation Sans", sans-serif;
}

.winbox-tools input::placeholder {
  color: #aaa;
}

.file-area {
  display: flex;
  margin-top: 3px;
  border: 1px solid #a0a0a0;
  background: #fff;
}

.files {
  flex: 1;
  table-layout: fixed;
  width: 100%;
  border-collapse: separate;
  border-spacing: 0;
}

.c-name {
  width: 215px;
}

.c-type {
  width: 107px;
}

.c-size {
  width: 96px;
}

.c-time {
  width: 134px;
}

.files th,
.files td {
  height: 16px;
  padding: 0 2px;
  border: solid #e2e2e2;
  border-width: 0 1px 1px 0;
  font-weight: normal;
  line-height: 15px;
  text-align: left;
  white-space: nowrap;
}

.files th {
  height: 19px;
  background: #f4f4f4;
  border-color: #a8a8a8;
}

.files td:first-child {
  padding: 0 0 0 1px;
}

.files td:nth-child(n + 3) {
  text-align: right;
}

.files td svg {
  width: 14px;
  height: 14px;
  margin-right: 2px;
  vertical-align: -3px;
}

.files .sort {
  float: right;
  width: 6px;
  height: 8px;
  margin: 3px 5px 0 0;
}

.files .selected td {
  background: #9cc5ee;
}

.files .focus td {
  border-bottom: 1px dotted #666;
}

.scroll {
  display: flex;
  flex-direction: column;
  width: 16px;
  border-left: 1px solid #a8a8a8;
  background: #f5f5f5;
}

.scroll button {
  height: 16px;
  border-bottom: 1px solid #a8a8a8;
}

.scroll button:last-child {
  border-bottom: 0;
}

.scroll .columns {
  height: 19px;
}

.scroll svg {
  display: block;
  width: 14px;
  height: 14px;
}

.scroll .thumb {
  flex: 1;
  border-bottom: 1px solid #999;
}

.scroll .track {
  height: 26px;
  background: #dadada;
  border-bottom: 1px solid #a8a8a8;
}

.winbox-status {
  display: flex;
  height: 22px;
  line-height: 20px;
}

.winbox-status .count {
  width: 156px;
  padding-left: 3px;
  border-right: 1px solid #a8a8a8;
}

.winbox-status .usage {
  width: 257px;
  padding-left: 3px;
}

/* context menu */
.menu {
  position: absolute;
  left: 374px;
  top: 548px;
  width: 229px;
  padding: 1px 2px 2px;
  border: 1px solid #c4c4c4;
  background: #f6f6f6;
  font-family: "Noto Sans", sans-serif;
}

.menu button {
  display: flex;
  justify-content: space-between;
  width: 100%;
  height: 23px;
  padding: 0 20px 0 34px;
  line-height: 23px;
}

.menu hr {
  margin: 4px 0 4px 31px;
  border: 0;
  border-top: 1px solid #cfcfcf;
}

/* explorer window */
.explorer {
  position: absolute;
  left: 795px;
  top: 179px;
  width: 804px;
  background: #fff;
  border-left: 1px solid #888;
  border-right: 2px solid #36424e;
  font-family: "Open Sans", "Noto Sans", sans-serif;
  font-size: 10px;
}

.ex-title {
  display: flex;
  height: 26px;
}

.quick {
  display: flex;
  align-items: center;
  gap: 6px;
  width: 199px;
  padding-left: 7px;
}

.quick svg {
  width: 14px;
  height: 16px;
}

.quick .drop {
  width: 8px;
  height: 8px;
}

.quick i {
  width: 1px;
  height: 11px;
  background: #bbb;
}

.context {
  width: 84px;
  margin-top: 3px;
  background: #f0ee80;
  line-height: 24px;
  text-align: center;
}

.ex-title h2 {
  flex: 1;
  padding-left: 12px;
  line-height: 26px;
  color: #999;
}

.controls {
  display: flex;
  align-items: center;
  gap: 30px;
  padding-right: 15px;
}

.controls svg {
  display: block;
  width: 10px;
  height: 10px;
}

.ex-tabs {
  display: flex;
  align-items: center;
  height: 21px;
  border-bottom: 1px solid #e2e3e4;
}

.ex-tabs button {
  width: 49px;
  height: 21px;
}

.ex-tabs .file {
  width: 48px;
  background: #0063b1;
  color: #fff;
}

.ex-tabs .home {
  width: 51px;
  background: #f5f6f7;
  border: solid #e2e3e4;
  border-width: 1px 1px 0;
}

.ex-tabs .tools {
  width: 84px;
  margin-left: 2px;
  border: solid #e2e3e4;
  border-width: 0 1px;
}

.ex-tabs .collapse {
  width: 10px;
  height: 10px;
  margin: 0 12px 0 auto;
}

.ex-tabs .help {
  width: 14px;
  height: 14px;
  margin-right: 2px;
  border-radius: 50%;
  background: #0063b1;
  color: #fff;
  font-weight: bold;
  line-height: 14px;
}

.ribbon {
  display: flex;
  height: 80px;
  padding: 2px 0;
  background: #f5f6f7;
  border-bottom: 1px solid #e2e3e4;
}

.group {
  display: flex;
  flex-direction: column;
  justify-content: space-between;
  border-right: 1px solid #e2e3e4;
}

.group p {
  line-height: 12px;
  color: #555;
  text-align: center;
}

.group .tools {
  display: flex;
  align-items: flex-start;
  padding-top: 2px;
}

.clipboard {
  width: 228px;
}

.organize {
  width: 166px;
}

.new {
  width: 126px;
}

.open {
  width: 116px;
}

.select {
  width: 101px;
}

.big {
  display: block;
  width: 36px;
  padding-top: 1px;
  line-height: 12px;
  white-space: nowrap;
}

.big svg {
  display: block;
  width: 24px;
  height: 28px;
  margin: 0 auto 3px;
}

.clipboard .pinto {
  width: 66px;
}

.pinto svg {
  width: 20px;
}

.clipboard .off:nth-child(2) {
  width: 31px;
}

.clipboard .paste {
  width: 42px;
}

.organize .tools {
  padding-left: 4px;
}

.organize .delete {
  width: 41px;
  margin-left: 4px;
  border-left: 1px solid #e2e3e4;
}

.organize .rename {
  width: 38px;
}

.new .big {
  width: 42px;
}

.open .big {
  width: 56px;
}

.off {
  color: #8a8a8a;
}

.stack {
  display: flex;
  flex-direction: column;
}

.stack button {
  display: flex;
  align-items: center;
  gap: 3px;
  height: 19px;
  white-space: nowrap;
}

.stack svg {
  width: 14px;
  height: 14px;
}

.select .stack {
  padding-left: 6px;
}

.ribbon b {
  display: inline-block;
  border: 2px solid transparent;
  border-top: 3px solid currentColor;
  border-bottom: 0;
  vertical-align: 2px;
}

.address {
  display: flex;
  align-items: center;
  height: 30px;
}

.address button {
  width: 26px;
  padding-left: 10px;
}

.address .narrow {
  width: 18px;
  padding-left: 5px;
}

.address svg {
  display: block;
  width: 12px;
  height: 12px;
}

.path {
  display: flex;
  align-items: center;
  flex: 1;
  height: 19px;
  margin: 0 10px 0 4px;
  padding-left: 3px;
  border: 1px solid #d9d9d9;
}

.path .dir {
  height: 14px;
  margin-right: 5px;
}

.path i {
  width: 4px;
  height: 4px;
  margin: 0 9px 0 1px;
  border: solid #666;
  border-width: 1px 1px 0 0;
  transform: rotate(45deg);
}

.path a {
  margin-right: 6px;
}

.path button {
  width: 15px;
  padding: 0;
}

.path a + button {
  margin: 0 3px 0 auto;
}

.path .reload {
  height: 17px;
  border-left: 1px solid #d9d9d9;
}

.path button svg {
  margin: 0 auto;
}

.search {
  display: flex;
  align-items: center;
  width: 212px;
  height: 19px;
  margin-right: 10px;
  padding: 0 6px;
  border: 1px solid #d9d9d9;
}

.search input {
  flex: 1;
  min-width: 0;
  padding: 0;
  border: 0;
  font: inherit;
}

.search input::placeholder {
  color: #777;
}

.ex-main {
  display: flex;
}

.tree {
  width: 121px;
  height: 361px;
  padding-top: 14px;
  overflow: hidden;
}

.tree a {
  display: flex;
  align-items: center;
  gap: 5px;
  height: 21px;
  padding-left: 27px;
  white-space: nowrap;
}

.tree svg {
  width: 14px;
  height: 14px;
}

.tree .root {
  margin-top: 6px;
  padding-left: 20px;
}

.tree .current {
  margin-top: 0;
  background: #d9d9d9;
}

.tree .pinned {
  width: 10px;
  height: 10px;
  margin: 0 2px 0 auto;
}

.tree-scroll {
  display: flex;
  flex-direction: column;
  justify-content: space-between;
  width: 13px;
  background: #f0f0f0;
}

.tree-scroll svg {
  width: 13px;
  height: 14px;
}

.tree-scroll .thumb {
  width: 13px;
  height: 218px;
  margin-bottom: auto;
  background: #cdcdcd;
}

.listing {
  flex: 1;
  position: relative;
  margin-left: 3px;
  padding: 1px 0 0 11px;
  border-left: 1px solid #f0f0f0;
}

.listing .asc {
  position: absolute;
  left: 120px;
  top: 0;
  width: 8px;
  height: 6px;
}

.listing table {
  border-spacing: 0;
}

.listing th {
  height: 22px;
  padding: 0 5px;
  border-right: 1px solid #e5e5e5;
  color: #5c6b85;
  font-weight: normal;
  text-align: left;
}

.listing td {
  height: 18px;
  padding: 0 5px;
  color: #777;
  white-space: nowrap;
}

.listing tbody::before {
  content: "";
  display: block;
  height: 6px;
}

.listing td:first-child {
  color: #222;
}

.listing td:last-child {
  padding-right: 7px;
  text-align: right;
}

.listing .hover td {
  background: #e5f3ff;
}

.listing td svg {
  width: 14px;
  height: 14px;
  margin-right: 4px;
  vertical-align: middle;
}

.l-name {
  width: 227px;
}

.l-date {
  width: 125px;
}

.l-type {
  width: 104px;
}

.l-size {
  width: 70px;
}

.ex-status {
  display: flex;
  align-items: center;
  height: 19px;
  padding: 0 5px 0 12px;
  color: #33455f;
}

.ex-status span {
  flex: 1;
}

.ex-status svg {
  display: block;
  width: 14px;
  height: 12px;
  margin: 0 auto;
}

.ex-status button {
  width: 19px;
}

.ex-status .details {
  height: 19px;
  background: #cbe8f6;
  border: 1px solid #4aa5e0;
}

/* marks drawn over the windows */
.mark {
  position: absolute;
  border: 2px solid #f00;
  border-radius: 1px;
}

.mark-system {
  left: 20px;
  top: 257px;
  width: 66px;
  height: 25px;
}

.mark-tab {
  left: 185px;
  top: 222px;
  width: 35px;
  height: 27px;
}

.mark-rows {
  left: 187px;
  top: 508px;
  width: 148px;
  height: 51px;
}

.mark-download {
  left: 394px;
  top: 712px;
  width: 100px;
  height: 28px;
}

.mark-result {
  left: 940px;
  top: 359px;
  width: 169px;
  height: 65px;
}

.step {
  position: absolute;
  width: 18px;
  height: 20px;
  background: rgba(255, 255, 200, 0.6);
  color: #f00;
  font: 16px/20px "DejaVu Sans", sans-serif;
  text-align: center;
}

.step-1 {
  left: 88px;
  top: 270px;
}

.step-2 {
  left: 165px;
  top: 221px;
}

.step-3 {
  left: 164px;
  top: 525px;
}

.step-4 {
  left: 496px;
  top: 716px;
}

.arrow {
  position: absolute;
  left: 514px;
  top: 428px;
  width: 432px;
  height: 298px;
}
```
